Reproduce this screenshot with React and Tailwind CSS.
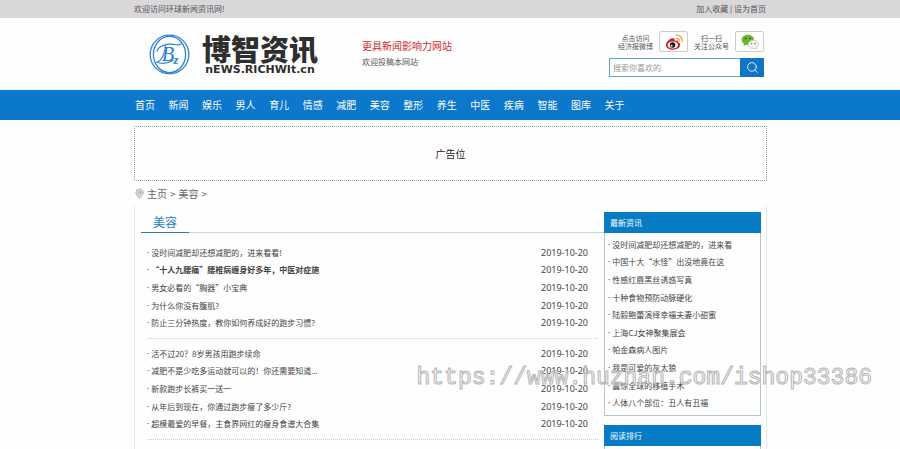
import React from 'react';
import { Search, MapPin } from 'lucide-react';

const navItems = [
  '首页', '新闻', '娱乐', '男人', '育儿', '情感', '减肥', '美容',
  '整形', '养生', '中医', '疾病', '智能', '图库', '关于'
];

const articleGroups = [
  [
    { title: '没时间减肥却还想减肥的，进来看看!', date: '2019-10-20' },
    { title: '“十人九腰痛”腰椎病缠身好多年，中医对症施', date: '2019-10-20', bold: true },
    { title: '男女必看的“胸器”小宝典', date: '2019-10-20' },
    { title: '为什么你没有腹肌?', date: '2019-10-20' },
    { title: '防止三分钟热度，教你如何养成好的跑步习惯?', date: '2019-10-20' }
  ],
  [
    { title: '活不过20？8岁男孩用跑步续命', date: '2019-10-20' },
    { title: '减肥不是少吃多运动就可以的！你还需要知道...', date: '2019-10-20' },
    { title: '新款跑步长裤买一送一', date: '2019-10-20' },
    { title: '从年后到现在，你通过跑步瘦了多少斤?', date: '2019-10-20' },
    { title: '超模最爱的早餐，主食界网红的瘦身食谱大合集', date: '2019-10-20' }
  ]
];

const latestNews = [
  '没时间减肥却还想减肥的，进来看',
  '中国十大“水怪”出没地竟在这',
  '性感红唇黑丝诱惑写真',
  '十种食物预防动脉硬化',
  '陆毅鲍蕾演绎幸福夫妻小甜蜜',
  '上海CJ女神聚集展会',
  '帕金森病人图片',
  '我是可爱的灰太狼',
  '震惊全球的移植手术',
  '人体八个部位：丑人有丑福'
];

const LogoMark = () => (
  <svg viewBox="0 0 42 42" className="h-[41px] w-[41px] shrink-0" fill="none" stroke="#2f7fd6">
    <circle cx="21" cy="21" r="19.8" strokeWidth="1.3" />
    <ellipse cx="21" cy="21" rx="16.500" ry="18.500" strokeWidth="1.3" />
    <path d="M8 18c1-5 9-9 20-7 3 .6 4-.5 5-1M17 12c-1 8-3 15-9 17 6 2 12 1 17-2" strokeWidth="1.2" />
    <text x="13" y="28" fontSize="21" fontStyle="italic" fill="#2f7fd6" stroke="none" fontFamily="Liberation Serif, serif">B</text>
    <text x="25" y="31" fontSize="13" fontStyle="italic" fontWeight="bold" fill="#2f7fd6" stroke="none" fontFamily="Liberation Serif, serif">z</text>
  </svg>
);

const WeiboIcon = () => (
  <svg viewBox="0 0 24 22" className="h-4 w-[18px]">
    <path d="M9 6C5 7.500 1 11.500 1 15c0 4 4.500 6.500 9.500 6.500 6 0 10-3.500 10-6.500 0-2-1.500-3-3-3.500.6-2-.4-3.500-4.500-2C13.500 6.500 12 5 9 6z" fill="#d5202c" />
    <ellipse cx="10.500" cy="15" rx="7.200" ry="4.800" fill="#fff" />
    <circle cx="10" cy="15" r="3.800" fill="#111" />
    <circle cx="8.800" cy="16" r="1.300" fill="#fff" />
    <path d="M15.500 6c2.500-.4 4 1.300 3.500 3.600M15.500 2c5-.8 8.500 3 7.500 8" fill="none" stroke="#f0a030" strokeWidth="1.800" strokeLinecap="round" />
  </svg>
);

const WechatIcon = () => (
  <svg viewBox="0 0 24 22" className="h-4 w-[18px]">
    <path d="M9 1C4 1 .5 4.200.5 8c0 2.300 1.200 4.200 3.200 5.500L3 16.500l3.200-1.800c.9.200 1.800.3 2.800.3 5 0 8.500-3 8.500-7S14 1 9 1z" fill="#6cb52d" />
    <circle cx="6" cy="6" r="1.200" fill="#2c5510" />
    <circle cx="12" cy="6" r="1.200" fill="#2c5510" />
    <path d="M16.500 8.500c-4 0-7 2.600-7 5.800s3 5.700 7 5.700c.8 0 1.600-.1 2.300-.3l2.600 1.500-.7-2.400c1.700-1.100 2.800-2.700 2.800-4.500 0-3.200-3-5.800-7-5.800z" fill="#f2f2f2" stroke="#b5b5b5" strokeWidth=".8" />
    <circle cx="14" cy="13" r="1" fill="#777" />
    <circle cx="19" cy="13" r="1" fill="#777" />
  </svg>
);

const SocialLink = ({ lines, label, children }) => (
  <div className="flex items-center gap-1.5">
    <p className="text-center text-[7px] leading-2 text-[#555]">
      {lines[0]}
      <br />
      {lines[1]}
    </p>
    <a
      href="#"
      aria-label={label}
      className="flex h-[21px] w-[29px] items-center justify-center rounded-xs border border-[#ccc] bg-white"
    >
      {children}
    </a>
  </div>
);

const Header = () => (
  <header>
    <div className="bg-[#d9d7da] text-[8px] leading-[18px] text-[#555]">
      <div className="mx-auto flex max-w-[634px] justify-between px-px">
        <span>欢迎访问环球新闻资讯网!</span>
        <div>
          <a href="#">加入收藏</a> | <a href="#">设为首页</a>
        </div>
      </div>
    </div>

    <div className="mx-auto flex max-w-[634px] items-center pt-[13px] pb-3">
      <a href="#" className="ml-4 flex items-center gap-3 text-[#2e2e2e]">
        <LogoMark />
        <span className="block text-center">
          <span className="block text-[29px] leading-8 font-black">博智资讯</span>
          <span className="block font-[DejaVu_Sans,sans-serif] text-[11px] leading-3 font-bold">nEWS.RICHWIt.cn</span>
        </span>
      </a>
      <div className="ml-11 text-[8px] leading-4 text-[#555]">
        <p className="text-[10px] text-[#cc2a2a]">更具新闻影响力网站</p>
        <p>欢迎投稿本网站</p>
      </div>
      <div className="mr-[3px] ml-auto">
        <div className="flex justify-end gap-1.5">
          <SocialLink lines={['点击访问', '经济报微博']} label="微博">
            <WeiboIcon />
          </SocialLink>
          <SocialLink lines={['扫一扫', '关注公众号']} label="微信">
            <WechatIcon />
          </SocialLink>
        </div>
        <form className="mt-1.5 flex h-[19px]" onSubmit={(e) => e.preventDefault()}>
          <input
            type="text"
            aria-label="搜索"
            placeholder="搜索你喜欢的."
            className="w-[131px] border border-r-0 border-[#5aa9c4] bg-white px-[3px] text-[8px] outline-none placeholder:text-[#999]"
          />
          <button type="submit" aria-label="搜索" className="flex w-6 items-center justify-center bg-[#1274c4] text-white">
            <Search size={13} strokeWidth={1.5} />
          </button>
        </form>
      </div>
    </div>
  </header>
);

const Nav = () => (
  <nav className="border-t border-[#dffcff] bg-[#0b78cb]">
    <div className="mx-auto max-w-[634px] pl-0.5">
      <div className="grid max-w-[503px] grid-cols-15 text-[10px] leading-[30px] text-white">
        {navItems.map((item) => (
          <a key={item} href="#" className="whitespace-nowrap">{item}</a>
        ))}
      </div>
    </div>
  </nav>
);

const ArticleGroup = ({ articles }) => (
  <ul className="mr-1.5 ml-3 box-content grid min-h-22 border-b border-dotted border-[#ccc] pb-1.5">
    {articles.map((article) => (
      <li key={article.title} className="flex items-center justify-between pr-2.5 text-[8px] leading-4 text-[#444]">
        <a href="#" className={article.bold ? 'font-bold' : ''}>
          <span className="mr-0.5 font-[Noto_Sans,sans-serif] font-normal">·</span>
          {article.title}
        </a>
        <time className="font-[Noto_Sans,sans-serif] text-[9px]">{article.date}</time>
      </li>
    ))}
  </ul>
);

const PanelTitle = ({ children }) => (
  <h3 className="bg-[#067cc4] px-1.5 text-[8px] leading-[21px] text-white">{children}</h3>
);

const App = () => (
  <div className="relative flex min-h-screen flex-col overflow-hidden bg-[#fefefe] font-['Noto_Sans_CJK_SC',sans-serif]">
    <Header />
    <Nav />

    <div className="mx-auto flex w-full max-w-[634px] flex-1 flex-col pl-px">
      <div className="mt-1.5 border border-dotted border-[#7fb0ba] text-center text-[10px] leading-[53px] text-[#222]">
        广告位
      </div>

      <div className="flex items-center gap-0.5 text-[10px] leading-[25px] text-[#666]">
        <MapPin size={11} strokeWidth={1.5} className="fill-[#ddd] text-[#999]" />
        <div className="flex gap-[3px]">
          <a href="#">主页</a>
          <span>&gt;</span>
          <a href="#">美容</a>
          <span>&gt;</span>
        </div>
      </div>

      <div className="flex flex-1 border-x border-[#e3e8ee]">
        <main className="flex-1">
          <div className="ml-1.5 flex border-b border-[#ccd4da]">
            <h2 className="-mb-px border-b border-[#2a7f95] px-3 pt-[5px] text-[12px] leading-[21px] text-[#1f7dbd]">美容</h2>
          </div>
          <div className="mt-[11px] grid gap-1.5">
            {articleGroups.map((articles) => (
              <ArticleGroup key={articles[0].title} articles={articles} />
            ))}
          </div>
        </main>

        <aside className="mt-1.5 mr-[5px] flex w-[157px] flex-col">
          <section>
            <PanelTitle>最新资讯</PanelTitle>
            <div className="border border-t-0 border-[#b4c6d2] py-[3px]">
              <ul className="grid min-h-44 px-[3px]">
                {latestNews.map((title) => (
                  <li key={title} className="flex items-center text-[8px] leading-4 text-[#444]">
                    <a href="#">
                      <span className="mr-0.5 font-[Noto_Sans,sans-serif]">·</span>
                      {title}
                    </a>
                  </li>
                ))}
              </ul>
            </div>
          </section>
          <section className="mt-[9px] flex flex-1 flex-col">
            <PanelTitle>阅读排行</PanelTitle>
            <div className="flex-1 border-x border-[#b4c6d2]" />
          </section>
        </aside>
      </div>
    </div>

    <div className="pointer-events-none absolute top-[360px] right-7 font-[Liberation_Mono,monospace] text-[23px] leading-9 text-white/50 [-webkit-text-stroke:1px_#b5b5b5]">
      https://www.huzhan.com/ishop33386
    </div>
  </div>
);

export default App;
